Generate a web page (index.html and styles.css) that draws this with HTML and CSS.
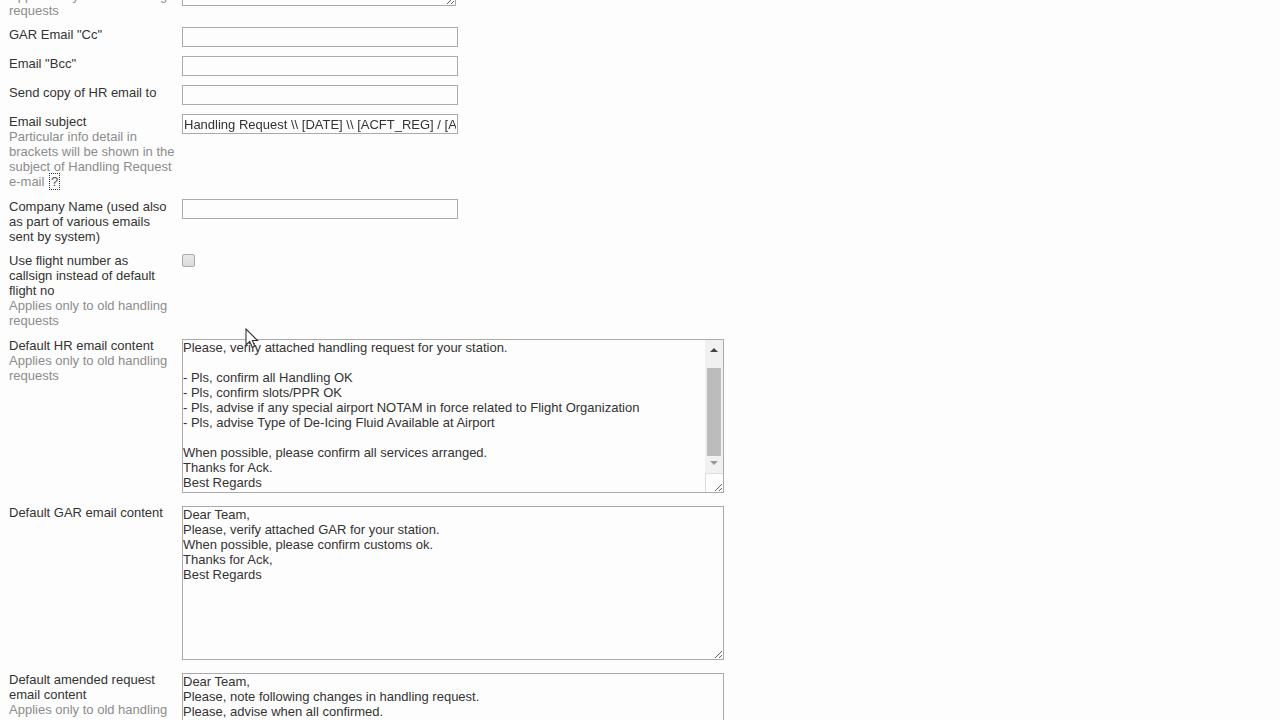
FILE: index.html
```html
<!DOCTYPE html>
<html lang="en">
<head>
<meta charset="utf-8">
<title>Email settings</title>
<link rel="stylesheet" href="styles.css">
</head>
<body>
<form class="settings">
  <div class="row">
    <label class="label" for="gar-to"><span class="hint">Applies only to old handling requests</span></label>
    <textarea class="area area--small" id="gar-to"></textarea>
  </div>
  <div class="row">
    <label class="label" for="gar-cc">GAR Email "Cc"</label>
    <input class="text" type="text" id="gar-cc">
  </div>
  <div class="row">
    <label class="label" for="bcc">Email "Bcc"</label>
    <input class="text" type="text" id="bcc">
  </div>
  <div class="row">
    <label class="label" for="copy">Send copy of HR email to</label>
    <input class="text" type="text" id="copy">
  </div>
  <div class="row row--long">
    <div class="label"><label for="subject">Email subject</label>
      <span class="hint">Particular info detail in brackets will be shown in the subject of Handling Request e-mail <button class="help" type="button">?</button></span></div>
    <input class="text" type="text" id="subject" value="Handling Request \\ [DATE] \\ [ACFT_REG] / [A">
  </div>
  <div class="row">
    <label class="label" for="company">Company Name (used also<br>as part of various emails<br>sent by system)</label>
    <input class="text" type="text" id="company">
  </div>
  <div class="row row--long">
    <label class="label" for="callsign">Use flight number as<br>callsign instead of default<br>flight no <span class="hint">Applies only to old handling requests</span></label>
    <input class="check" type="checkbox" id="callsign">
  </div>
  <div class="row row--area">
    <label class="label" for="hr">Default HR email content <span class="hint">Applies only to old handling requests</span></label>
    <div class="scroller">
      <textarea class="area" id="hr">Dear Team,
Please, verify attached handling request for your station.

- Pls, confirm all Handling OK
- Pls, confirm slots/PPR OK
- Pls, advise if any special airport NOTAM in force related to Flight Organization
- Pls, advise Type of De-Icing Fluid Available at Airport

When possible, please confirm all services arranged.
Thanks for Ack.
Best Regards</textarea>
      <div class="bar" aria-hidden="true">
        <svg class="arrow arrow--up" width="8" height="4" viewBox="0 0 8 4"><path d="M0 4L4 0L8 4Z"/></svg>
        <div class="track"><div class="thumb"></div></div>
        <svg class="arrow arrow--down" width="8" height="4" viewBox="0 0 8 4"><path d="M0 0L4 4L8 0Z"/></svg>
      </div>
      <div class="corner" aria-hidden="true"></div>
    </div>
  </div>
  <div class="row row--area">
    <label class="label" for="gar">Default GAR email content</label>
    <textarea class="area" id="gar">Dear Team,
Please, verify attached GAR for your station.
When possible, please confirm customs ok.
Thanks for Ack,
Best Regards</textarea>
  </div>
  <div class="row row--area">
    <label class="label" for="amended">Default amended request email content <span class="hint">Applies only to old handling</span></label>
    <textarea class="area" id="amended">Dear Team,
Please, note following changes in handling request.
Please, advise when all confirmed.</textarea>
  </div>
</form>
<svg class="pointer" width="14" height="21" viewBox="0 0 14 21" aria-hidden="true"><path d="M1 1V17L4.7 13.5L7.2 19.3L9.8 18.2L7.4 12.5H12.5Z" fill="#fff" stroke="#333" stroke-width="1.1"/></svg>
<script src="main.js"></script>
</body>
</html>
```
FILE: styles.css
```css
html, body {
  height: 100%;
  margin: 0;
  overflow: hidden;
}

body {
  background: #fdfdfd;
  color: #333;
  font: 13px/15px "Liberation Sans", Arial, sans-serif;
}

.settings {
  display: flex;
  flex-direction: column;
  gap: 9px;
  margin-top: -12px;
  padding: 0 9px;
}

.row {
  display: grid;
  grid-template-columns: 170px minmax(0, 1fr);
  column-gap: 3px;
  align-items: start;
  min-height: 20px;
}

.row--long {
  padding-bottom: 1px;
}

.row--area {
  min-height: 158px;
}

.hint {
  display: block;
  color: #8c8c8c;
}

.text,
.area {
  box-sizing: border-box;
  max-width: 100%;
  border: 1px solid #aaa;
  border-radius: 0;
  background: #fdfdfd;
  color: #333;
  font: inherit;
}

.text {
  width: 276px;
  height: 20px;
  margin: 0;
  padding: 0 1px;
}

.area {
  display: block;
  width: 542px;
  height: 154px;
  margin: 0;
  padding: 0 0 2px;
  overflow: auto;
  resize: both;
}

.row--area .area {
  margin-top: 1px;
}

.area--small {
  width: 274px;
  height: 18px;
}

.scroller {
  position: relative;
  justify-self: start;
}

.bar {
  position: absolute;
  top: 2px;
  right: 1px;
  bottom: 19px;
  display: flex;
  flex-direction: column;
  align-items: center;
  box-sizing: border-box;
  width: 18px;
  padding: 8px 0;
  border-bottom: 1px solid #ddd;
  background: #f1f1f1;
}

.track {
  display: flex;
  flex: 1;
  align-items: flex-end;
  padding: 5px 0;
}

.thumb {
  width: 14px;
  height: 88px;
  background: #bcbcbc;
}

.corner {
  position: absolute;
  right: 1px;
  bottom: 1px;
  box-sizing: border-box;
  width: 18px;
  height: 18px;
  border-left: 1px solid #ddd;
  pointer-events: none;
}

.arrow--up {
  fill: #444;
}

.arrow--down {
  fill: #999;
}

.check {
  appearance: none;
  width: 13px;
  height: 13px;
  margin: 1px 0 0;
  border: 1px solid #aaa;
  border-radius: 2px;
  background: linear-gradient(#e8e8e8, #dcdcdc);
}

.help {
  margin: 0 0 0 2px;
  padding: 0 1px;
  border: 0;
  outline: 1px dotted #333;
  background: none;
  color: #555;
  font: inherit;
}

.pointer {
  position: absolute;
  top: 328px;
  left: 245px;
}
```
FILE: main.js
```js
const content = document.getElementById("hr");
content.scrollTop = content.scrollHeight;
```
